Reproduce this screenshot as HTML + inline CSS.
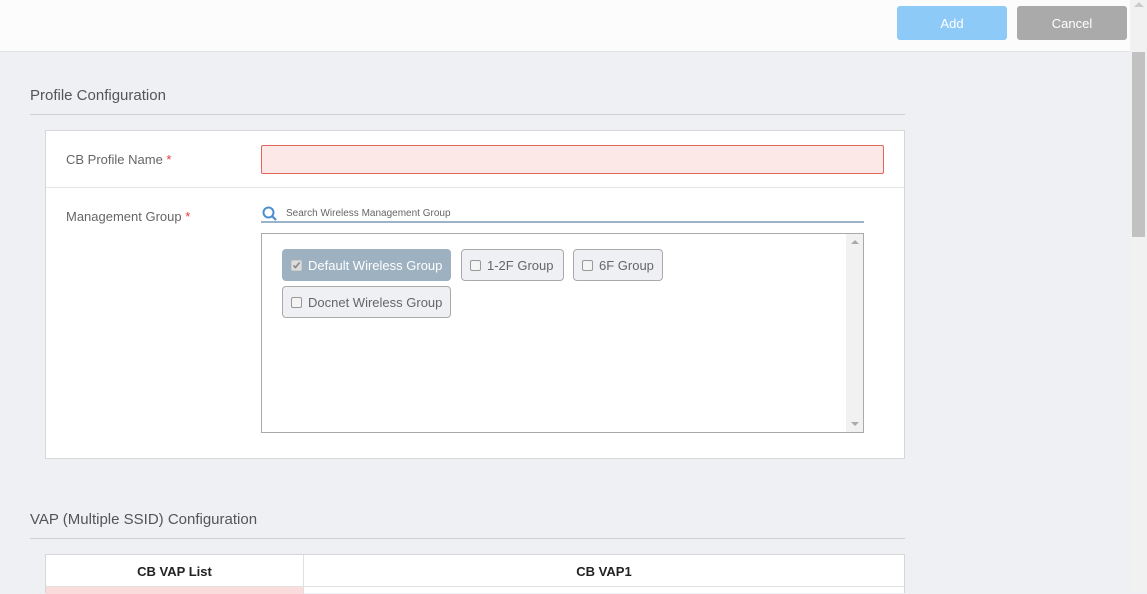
<!DOCTYPE html>
<html><head><meta charset="utf-8"><style>
*{box-sizing:border-box;margin:0;padding:0}
body{width:1147px;height:593px;overflow:hidden;background:#eff0f4;font-family:"Liberation Sans",sans-serif;position:relative;color:#555}
.hdr{position:absolute;left:0;top:0;width:1130px;height:52px;background:#fcfcfc;border-bottom:1px solid #e2e2e2}
.btn{position:absolute;top:6px;height:34px;width:110px;border-radius:3px;color:#fff;font-size:13px;text-align:center;line-height:35px}
.sb{position:absolute;left:1130px;top:0;width:17px;height:593px;background:#f1f1f1}
.thumb{position:absolute;left:1132px;top:52px;width:13px;height:185px;background:#c1c1c1}
.t{position:absolute;font-size:15px;color:#555}
.line{position:absolute;left:30px;width:875px;height:1px;background:#cfd0d4}
.card{position:absolute;left:45px;top:130px;width:860px;height:329px;background:#fff;border:1px solid #d6d6d6}
.lbl{position:absolute;font-size:13px;color:#666}
.req{color:#e53935}
.chip{position:absolute;height:32px;border:1px solid #aaa;border-radius:4px;background:#eff0f4;font-size:13px;color:#666;line-height:31px;padding-left:8px}
.cb{display:inline-block;width:11px;height:11px;border:1px solid #999;border-radius:2px;background:#f4f4f4;vertical-align:-1px;margin-right:6px;position:relative}
</style></head><body>
<div class="hdr">
<div class="btn" style="left:897px;background:#8ecaf8">Add</div>
<div class="btn" style="left:1017px;background:#aaaaaa">Cancel</div>
</div>
<div class="sb"></div><div class="thumb"></div>
<div style="position:absolute;left:1134px;top:2px;width:0;height:0;border-left:5px solid transparent;border-right:5px solid transparent;border-bottom:5px solid #ccc"></div>

<div class="t" style="left:30px;top:87px">Profile Configuration</div>
<div class="line" style="top:114px"></div>
<div class="card">
 <div class="lbl" style="left:20px;top:21px">CB Profile Name <span class="req">*</span></div>
 <div style="position:absolute;left:215px;top:14px;width:623px;height:29px;background:#fde8e8;border:1px solid #e0655a;border-radius:2px"></div>
 <div style="position:absolute;left:0;top:56px;width:858px;height:1px;background:#e4e4e4"></div>
 <div class="lbl" style="left:20px;top:78px">Management Group <span class="req">*</span></div>
 <svg style="position:absolute;left:216px;top:75px" width="16" height="16" viewBox="0 0 16 16"><circle cx="6.5" cy="6.5" r="5" fill="none" stroke="#4a8fd0" stroke-width="2"/><line x1="10" y1="10" x2="14" y2="14" stroke="#4a8fd0" stroke-width="2.2"/></svg>
 <div style="position:absolute;left:240px;top:77px;font-size:10px;color:#666">Search Wireless Management Group</div>
 <div style="position:absolute;left:215px;top:90px;width:603px;height:2px;background:#9ab3c9"></div>
 <div style="position:absolute;left:215px;top:102px;width:603px;height:200px;border:1px solid #aaa;background:#fff">
  <div style="position:absolute;right:0;top:0;width:17px;height:198px;background:#f1f1f1"></div>
  <div style="position:absolute;right:4px;top:6px;border-left:4px solid transparent;border-right:4px solid transparent;border-bottom:4px solid #aaa"></div>
  <div style="position:absolute;right:4px;bottom:6px;border-left:4px solid transparent;border-right:4px solid transparent;border-top:4px solid #aaa"></div>
  <div class="chip" style="left:20px;top:15px;width:169px;background:#9db1c1;border-color:#9db1c1;color:#fff"><span class="cb" style="background:#ddd;border-color:#ccc"><svg style="position:absolute;left:0;top:0" width="9" height="9" viewBox="0 0 9 9"><path d="M1.5 4.5 L3.5 6.5 L7.5 1.5" fill="none" stroke="#888" stroke-width="1.6"/></svg></span>Default Wireless Group</div>
  <div class="chip" style="left:199px;top:15px;width:103px"><span class="cb"></span>1-2F Group</div>
  <div class="chip" style="left:311px;top:15px;width:90px"><span class="cb"></span>6F Group</div>
  <div class="chip" style="left:20px;top:52px;width:169px"><span class="cb"></span>Docnet Wireless Group</div>
 </div>
</div>

<div class="t" style="left:30px;top:511px">VAP (Multiple SSID) Configuration</div>
<div class="line" style="top:538px"></div>
<div style="position:absolute;left:45px;top:554px;width:860px;height:39px;background:#fff;border:1px solid #d6d6d6;border-bottom:none">
 <div style="position:absolute;left:257px;top:0;width:1px;height:39px;background:#e0e0e0"></div>
 <div style="position:absolute;left:0;top:9px;width:257px;text-align:center;font-size:13px;font-weight:bold;color:#222">CB VAP List</div>
 <div style="position:absolute;left:258px;top:9px;width:600px;text-align:center;font-size:13px;font-weight:bold;color:#222">CB VAP1</div>
 <div style="position:absolute;left:0;top:31px;width:858px;height:1px;background:#e0e0e0"></div>
 <div style="position:absolute;left:0;top:32px;width:257px;height:7px;background:#fbdcdc"></div>
</div>
</body></html>
